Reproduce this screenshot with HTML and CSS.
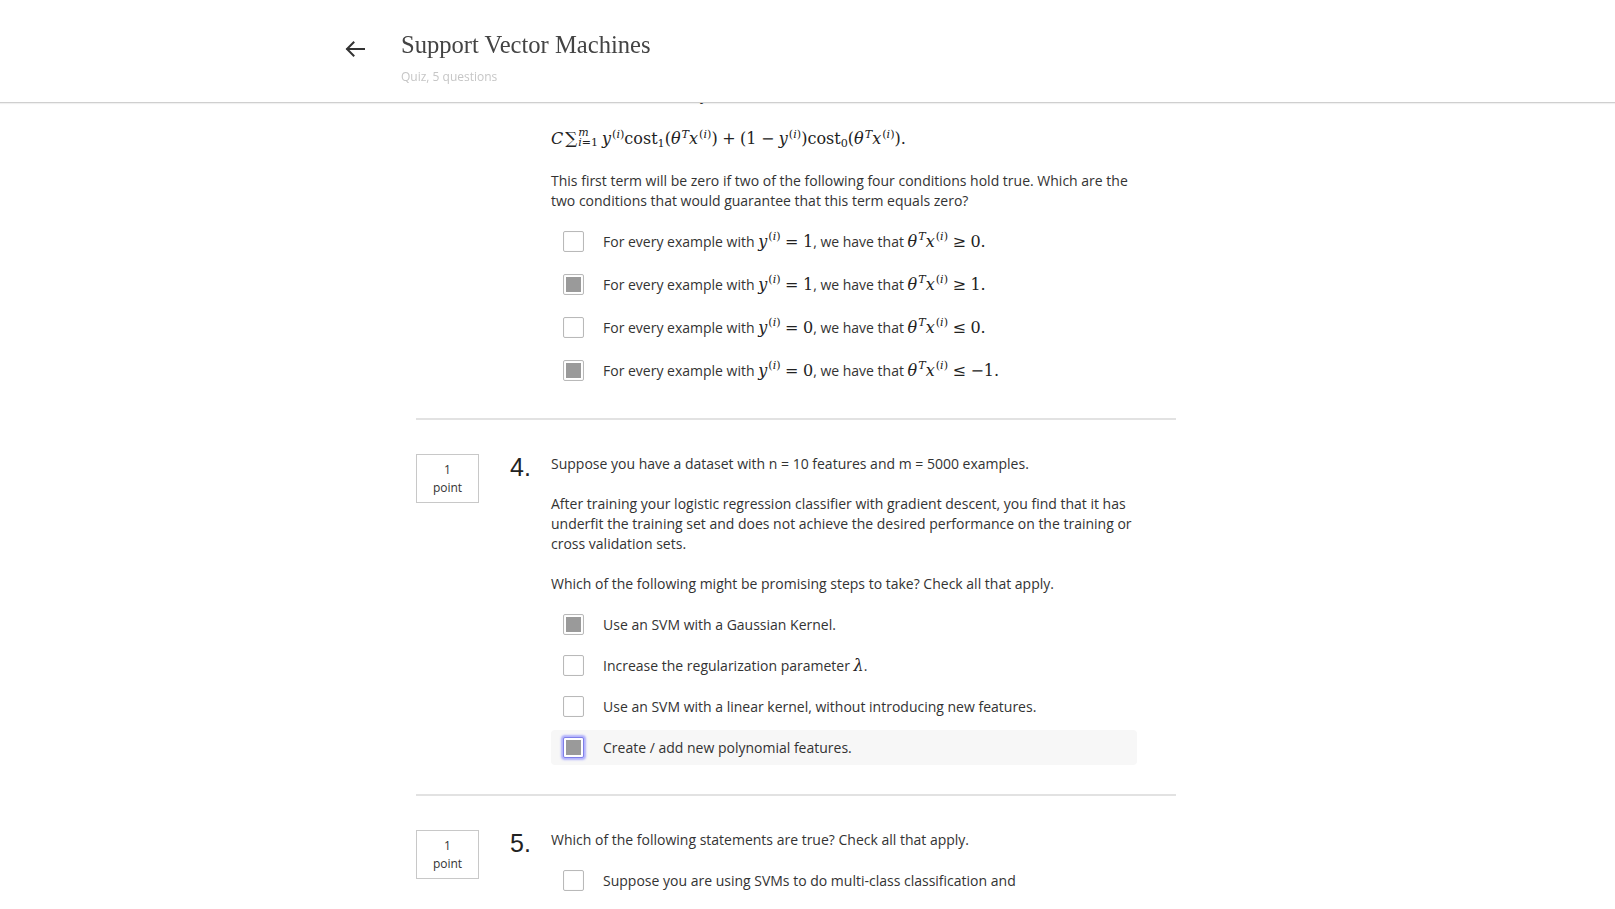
FILE: index.html
```html
<!DOCTYPE html>
<html lang="en">
<head>
<meta charset="utf-8">
<title>Support Vector Machines</title>
<link rel="stylesheet" href="styles.css">
</head>
<body>
<header class="topbar">
  <div class="topbar-inner">
    <a class="back" href="#" aria-label="Back">
      <svg width="20" height="16" viewBox="0 0 20 16" fill="none" stroke="#333" stroke-width="2" stroke-linecap="square" stroke-linejoin="miter"><path d="M19 8H2.5"/><path d="M8.5 1.5L2 8l6.5 6.5"/></svg>
    </a>
    <div class="titles">
      <h1 class="title">Support Vector Machines</h1>
      <div class="subtitle">Quiz, 5 questions</div>
    </div>
  </div>
</header>

<main class="content">
  <section class="question q3">
    <div class="points-col"></div>
    <div class="num-col"></div>
    <div class="q-body">
      <p>The first term in the objective is:</p>
      <div class="formula math">
        <i>C</i><span class="sum">∑</span><span class="limits"><span class="lim-up"><i>m</i></span><span class="lim-dn"><i>i</i>=1</span></span><i>y</i><sup>(<i>i</i>)</sup>cost<sub>1</sub>(<i>θ</i><sup><i>T</i></sup><i>x</i><sup>(<i>i</i>)</sup>)<span class="mo">+</span>(1<span class="mo">−</span><i>y</i><sup>(<i>i</i>)</sup>)cost<sub>0</sub>(<i>θ</i><sup><i>T</i></sup><i>x</i><sup>(<i>i</i>)</sup>).
      </div>
      <p class="gap">This first term will be zero if two of the following four conditions hold true. Which are the two conditions that would guarantee that this term equals zero?</p>
      <div class="options">
        <label class="option tall"><span class="box"></span><span class="opt-text">For every example with <span class="math"><i>y</i><sup>(<i>i</i>)</sup><span class="mo">=</span>1</span>, we have that <span class="math"><i>θ</i><sup><i>T</i></sup><i>x</i><sup>(<i>i</i>)</sup><span class="mo">≥</span>0.</span></span></label>
        <label class="option tall"><span class="box checked"></span><span class="opt-text">For every example with <span class="math"><i>y</i><sup>(<i>i</i>)</sup><span class="mo">=</span>1</span>, we have that <span class="math"><i>θ</i><sup><i>T</i></sup><i>x</i><sup>(<i>i</i>)</sup><span class="mo">≥</span>1.</span></span></label>
        <label class="option tall"><span class="box"></span><span class="opt-text">For every example with <span class="math"><i>y</i><sup>(<i>i</i>)</sup><span class="mo">=</span>0</span>, we have that <span class="math"><i>θ</i><sup><i>T</i></sup><i>x</i><sup>(<i>i</i>)</sup><span class="mo">≤</span>0.</span></span></label>
        <label class="option tall"><span class="box checked"></span><span class="opt-text">For every example with <span class="math"><i>y</i><sup>(<i>i</i>)</sup><span class="mo">=</span>0</span>, we have that <span class="math"><i>θ</i><sup><i>T</i></sup><i>x</i><sup>(<i>i</i>)</sup><span class="mo">≤</span>−1.</span></span></label>
      </div>
    </div>
  </section>

  <section class="question">
    <div class="points-col"><div class="points">1<br>point</div></div>
    <div class="num-col"><div class="qnum">4.</div></div>
    <div class="q-body">
      <p>Suppose you have a dataset with n = 10 features and m = 5000 examples.</p>
      <p class="gap">After training your logistic regression classifier with gradient descent, you find that it has underfit the training set and does not achieve the desired performance on the training or cross validation sets.</p>
      <p class="gap">Which of the following might be promising steps to take? Check all that apply.</p>
      <div class="options">
        <label class="option"><span class="box checked"></span><span class="opt-text">Use an SVM with a Gaussian Kernel.</span></label>
        <label class="option"><span class="box"></span><span class="opt-text">Increase the regularization parameter <span class="math"><i>λ</i></span>.</span></label>
        <label class="option"><span class="box"></span><span class="opt-text">Use an SVM with a linear kernel, without introducing new features.</span></label>
        <label class="option focused"><span class="box checked focus"></span><span class="opt-text">Create / add new polynomial features.</span></label>
      </div>
    </div>
  </section>

  <section class="question">
    <div class="points-col"><div class="points">1<br>point</div></div>
    <div class="num-col"><div class="qnum">5.</div></div>
    <div class="q-body">
      <p>Which of the following statements are true? Check all that apply.</p>
      <div class="options">
        <label class="option"><span class="box"></span><span class="opt-text">Suppose you are using SVMs to do multi-class classification and</span></label>
      </div>
    </div>
  </section>
</main>
</body>
</html>
```

FILE: styles.css
```css
html, body {
  margin: 0;
  padding: 0;
  background: #fff;
}

body {
  font-family: "Open Sans", "Liberation Sans", sans-serif;
  color: #333;
  font-size: 14px;
  line-height: 20px;
}

/* ---------- header ---------- */
.topbar {
  position: fixed;
  top: 0;
  left: 0;
  right: 0;
  height: 102px;
  background: #fff;
  border-bottom: 1px solid #cfcfcf;
  box-shadow: 0 1px 1px rgba(0, 0, 0, 0.06);
  z-index: 10;
}

.topbar-inner {
  margin-left: calc(50% - 462.5px);
  display: flex;
  align-items: flex-start;
  gap: 36px;
  padding-top: 31px;
}

.back {
  display: block;
  margin-top: 10px;
  width: 20px;
  height: 16px;
}

.back svg {
  display: block;
}

.title {
  margin: 0;
  font-family: "Liberation Serif", "DejaVu Serif", serif;
  font-weight: normal;
  font-size: 24.6px;
  line-height: 28px;
  color: #444;
}

.subtitle {
  margin-top: 10px;
  font-size: 12px;
  line-height: 16px;
  color: #c6c6c6;
}

/* ---------- content ---------- */
.content {
  width: 760px;
  margin-left: calc(50% - 391.5px);
  padding-top: 85px;
}

.question {
  display: flex;
  align-items: flex-start;
  padding: 34px 0 29px;
  border-bottom: 2px solid #e2e2e2;
}

.question.q3 {
  padding-top: 0;
}

.question:last-child {
  border-bottom: none;
}

.points-col {
  width: 63px;
  flex: none;
}

.points {
  box-sizing: border-box;
  width: 63px;
  height: 49px;
  border: 1px solid #c8c8c8;
  display: flex;
  align-items: center;
  justify-content: center;
  text-align: center;
  font-size: 12px;
  line-height: 18px;
  color: #333;
}

.num-col {
  width: 41px;
  margin-left: 31px;
  flex: none;
}

.qnum {
  font-family: "Liberation Sans", Arial, sans-serif;
  font-size: 25px;
  line-height: 27px;
  color: #222;
}

.q-body {
  width: 586px;
  flex: none;
}

.q-body p {
  margin: 0;
}

.q-body p.gap {
  margin-top: 20px;
}

/* ---------- math ---------- */
.math {
  font-family: "DejaVu Serif", "Liberation Serif", serif;
  font-size: 16px;
  color: #222;
  white-space: nowrap;
}

.math i {
  font-style: italic;
}

.math sup,
.math sub {
  font-size: 0.7em;
  line-height: 0;
}

.math sup {
  vertical-align: 0.55em;
  margin-left: 1px;
}

.math sub {
  vertical-align: -0.25em;
}

.mo {
  margin: 0 0.28em;
}

.formula {
  display: block;
  margin-top: 20px;
  height: 26px;
  line-height: 26px;
  font-size: 16px;
}

.sum {
  font-size: 1.05em;
  margin-left: 2px;
}

.limits {
  display: inline-flex;
  flex-direction: column;
  vertical-align: middle;
  font-size: 11px;
  line-height: 10px;
  margin: 0 4px 0 1px;
  position: relative;
  top: -2px;
}

/* ---------- options ---------- */
.options {
  margin-top: 13px;
  display: flex;
  flex-direction: column;
  gap: 6px;
}

.q3 .options {
  margin-top: 12px;
}

.option {
  display: flex;
  align-items: center;
  gap: 19px;
  height: 35px;
  padding-left: 12px;
  border-radius: 4px;
  cursor: pointer;
}

.option.tall {
  height: 37px;
}

.option.focused {
  background: #f7f7f7;
}

.box {
  box-sizing: border-box;
  width: 21px;
  height: 21px;
  flex: none;
  border: 1px solid #b9b9b9;
  border-radius: 2px;
  background: #fff;
  box-shadow: inset 0 0 2px rgba(0, 0, 0, 0.06);
  position: relative;
}

.box.checked::after {
  content: "";
  position: absolute;
  left: 2px;
  top: 2px;
  right: 2px;
  bottom: 2px;
  background: #9a9a9a;
}

.box.focus {
  border-color: #7f7fe8;
  box-shadow: 0 0 2px 2px rgba(130, 130, 255, 0.6);
}

.opt-text {
  color: #333;
}
```
